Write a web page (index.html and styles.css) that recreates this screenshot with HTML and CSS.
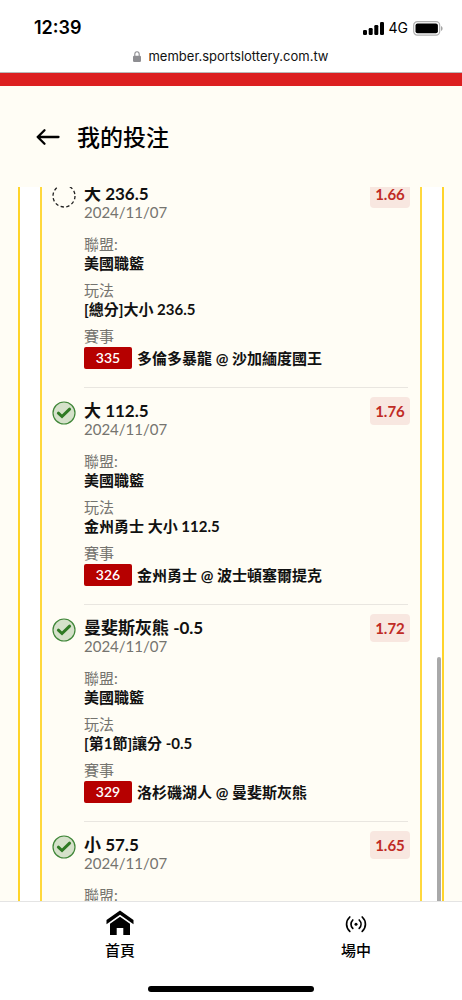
FILE: index.html
```html
<!DOCTYPE html>
<html lang="zh-Hant">
<head>
<meta charset="utf-8">
<meta name="viewport" content="width=device-width, initial-scale=1">
<title>我的投注</title>
<link rel="stylesheet" href="styles.css">
</head>
<body>
<svg class="defs" aria-hidden="true">
  <symbol id="won" viewBox="0 0 24 24">
    <circle cx="12" cy="12" r="11" fill="#d5e1ca" stroke="#3f8638" stroke-width="1.2"/>
    <path d="M6.400 12.200 10 15.500 17.600 8.200" fill="none" stroke="#2f7a24" stroke-width="3" stroke-linecap="round" stroke-linejoin="miter"/>
  </symbol>
</svg>
<div class="screen">
  <div class="status">
    <time class="clock">12:39</time>
    <div class="signals">
      <svg width="21" height="13" viewBox="0 0 21 13" aria-hidden="true"><rect x="0" y="8" width="4" height="5" rx="1.2"/><rect x="5.7" y="6" width="4" height="7" rx="1.2"/><rect x="11.3" y="3" width="4" height="10" rx="1.2"/><rect x="17" y="0" width="4" height="13" rx="1.2"/></svg>
      <span class="network">4G</span>
      <svg width="30" height="15" viewBox="0 0 30 15" aria-hidden="true"><rect x=".7" y=".7" width="26" height="13.4" rx="3.6" fill="none" stroke="#b0b0b0" stroke-width="1.2"/><rect x="2.5" y="2.5" width="22.4" height="9.8" rx="2"/><path d="M28 5v5c1-.4 1.6-1.300 1.600-2.500S29 5.400 28 5z" fill="#a5a5a5"/></svg>
    </div>
  </div>
  <div class="address">
    <svg width="8" height="11" viewBox="0 0 8 11" aria-hidden="true"><path d="M1.800 5V3.200a2.200 2.400 0 0 1 4.400 0V5" fill="none" stroke="#8e8e92" stroke-width="1.100"/><rect y="4.700" width="8" height="6.300" rx="1.200" fill="#8e8e92"/></svg>
    <span>member.sportslottery.com.tw</span>
  </div>
  <div class="brand-bar"></div>
  <header class="header">
    <button class="back" type="button" aria-label="返回">
      <svg width="24" height="18" viewBox="0 0 24 18" fill="none" stroke="#000" stroke-width="2.300" stroke-linecap="round" stroke-linejoin="round" aria-hidden="true"><path d="M22.500 9H1.700M8.500 2.200 1.700 9l6.800 6.800"/></svg>
    </button>
    <h1>我的投注</h1>
  </header>
  <main class="scroller">
    <div class="outer">
      <ul class="bets">
        <li class="bet">
          <svg class="state" viewBox="0 0 24 24" role="img" aria-label="未開獎"><circle cx="12" cy="12" r="11" fill="none" stroke="#222" stroke-width="1.300" stroke-dasharray="3.320 2.440"/></svg>
          <div class="info">
            <h2>大 236.5</h2><p class="date">2024/11/07</p>
            <dl>
              <div><dt>聯盟:</dt><dd>美國職籃</dd></div>
              <div><dt>玩法</dt><dd>[總分]大小 236.5</dd></div>
              <div><dt>賽事</dt><dd class="match"><span class="code">335</span>多倫多暴龍 @ 沙加緬度國王</dd></div>
            </dl>
          </div>
          <span class="odds">1.66</span>
        </li>
        <li class="bet">
          <svg class="state" role="img" aria-label="中獎"><use href="#won"/></svg>
          <div class="info">
            <h2>大 112.5</h2><p class="date">2024/11/07</p>
            <dl>
              <div><dt>聯盟:</dt><dd>美國職籃</dd></div>
              <div><dt>玩法</dt><dd>金州勇士 大小 112.5</dd></div>
              <div><dt>賽事</dt><dd class="match"><span class="code">326</span>金州勇士 @ 波士頓塞爾提克</dd></div>
            </dl>
          </div>
          <span class="odds">1.76</span>
        </li>
        <li class="bet">
          <svg class="state" role="img" aria-label="中獎"><use href="#won"/></svg>
          <div class="info">
            <h2>曼斐斯灰熊 -0.5</h2><p class="date">2024/11/07</p>
            <dl>
              <div><dt>聯盟:</dt><dd>美國職籃</dd></div>
              <div><dt>玩法</dt><dd>[第1節]讓分 -0.5</dd></div>
              <div><dt>賽事</dt><dd class="match"><span class="code">329</span>洛杉磯湖人 @ 曼斐斯灰熊</dd></div>
            </dl>
          </div>
          <span class="odds">1.72</span>
        </li>
        <li class="bet">
          <svg class="state" role="img" aria-label="中獎"><use href="#won"/></svg>
          <div class="info">
            <h2>小 57.5</h2><p class="date">2024/11/07</p>
            <dl>
              <div><dt>聯盟:</dt></div>
            </dl>
          </div>
          <span class="odds">1.65</span>
        </li>
      </ul>
    </div>
    <div class="thumb"></div>
  </main>
  <nav class="tabs">
    <a href="#home">
      <svg width="28" height="26" viewBox="0 0 28 26" aria-hidden="true"><path d="M14 .5 27.500 10v4.300L14 4.700.5 14.300V10z"/><path d="M14 6.800 24 13.800V25h-6.700v-7h-6.600v7H4V13.800z"/></svg>
      <span>首頁</span>
    </a>
    <a href="#live">
      <svg width="28" height="26" viewBox="0 0 28 26" fill="none" stroke="#000" stroke-width="1.700" stroke-linecap="round" aria-hidden="true"><path d="M7.800 7C3.500 11 3.500 17.400 7.800 21.400M20.200 7c4.300 4 4.300 10.400 0 14.400M10.800 10c-2.400 2.400-2.400 6 0 8.400M17.200 10c2.400 2.400 2.400 6 0 8.400"/><circle cx="14" cy="14.200" r="1.500" fill="#000" stroke="none"/></svg>
      <span>場中</span>
    </a>
  </nav>
  <div class="home-indicator"></div>
</div>
</body>
</html>
```
FILE: styles.css
```css
* { box-sizing: border-box; }
body, h1, h2, p, ul, dl, dd { margin: 0; padding: 0; }
body {
  background: #fff;
  color: #111;
  font-family: Lato, "Noto Sans CJK TC", sans-serif;
}
.defs { position: absolute; width: 0; height: 0; }
.screen { display: flex; flex-direction: column; height: 100vh; overflow: hidden; }
.status {
  display: flex;
  justify-content: space-between;
  align-items: center;
  padding: 18px 19px 0 34px;
  font-family: Inter, sans-serif;
  color: #000;
}
.clock { font-size: 18px; line-height: 20px; font-weight: 600; }
.signals { display: flex; align-items: center; gap: 5px; }
.network { font-size: 14px; line-height: 20px; }
.address {
  display: flex;
  justify-content: center;
  align-items: center;
  gap: 7px;
  flex: none;
  height: 35px;
  padding-top: 2px;
  border-bottom: 1px solid #b9b9b9;
  font: 13px/16px Inter, sans-serif;
}
.brand-bar { flex: none; height: 13px; background: #dc1f20; }
.header {
  display: flex;
  align-items: center;
  gap: 17px;
  flex: none;
  height: 101px;
  padding-left: 36px;
  background: #fffdf5;
}
.back { display: flex; padding: 0; border: 0; background: none; }
h1 { font-size: 23px; line-height: 32px; font-weight: 500; color: #000; }
.scroller {
  position: relative;
  flex: 1;
  min-height: 0;
  overflow: hidden;
  padding: 0 18px;
  background: #fffdf5;
}
.outer {
  padding: 0 20px;
  border: solid #ffd42a;
  border-width: 0 2px;
  background: #fff;
}
.bets {
  margin-top: -16px;
  padding: 0 10px 0 10px;
  min-height: 100vh;
  list-style: none;
  border: solid #ffd83d;
  border-width: 0 2px;
  background: #fffdf5;
}
.bet { display: flex; gap: 8px; position: relative; }
.state { flex: none; width: 24px; height: 24px; margin-top: 13px; }
.info { flex: 1; margin-right: 2px; padding: 12px 0 17px; border-bottom: 1px solid #e9e6e0; }
h2 { font-size: 17px; line-height: 21px; font-weight: 700; }
.date { margin-bottom: 15px; font-size: 15px; line-height: 16px; color: #75746f; }
dl { display: grid; gap: 8px; }
dt { font-size: 15px; line-height: 19px; color: #75746f; }
dd { font-size: 15px; line-height: 19px; font-weight: 700; }
.match { display: flex; align-items: center; gap: 5px; line-height: 24px; }
.code {
  width: 48px;
  border-radius: 2px;
  background: #b60000;
  color: #fff;
  font-size: 14px;
  line-height: 22px;
  font-weight: 600;
  text-align: center;
}
.odds {
  position: absolute;
  top: 9px;
  right: 0;
  width: 40px;
  border-radius: 4px;
  background: #f8e7e0;
  color: #c02b25;
  font-size: 15px;
  line-height: 28px;
  font-weight: 700;
  text-align: center;
}
.thumb {
  position: absolute;
  top: 470px;
  right: 21px;
  bottom: 0;
  width: 4px;
  border-radius: 2px 2px 0 0;
  background: #a9a9a9;
}
.tabs {
  display: flex;
  justify-content: space-between;
  padding: 8px 90px 0 104px;
  border-top: 1px solid #e4e4e4;
}
.tabs a {
  display: flex;
  flex-direction: column;
  align-items: center;
  gap: 4px;
  width: 32px;
  color: #000;
  text-decoration: none;
  white-space: nowrap;
  font-size: 15px;
  line-height: 20px;
  font-weight: 500;
}
.home-indicator {
  flex: none;
  align-self: center;
  width: 166px;
  height: 6px;
  margin: 26px 0 8px;
  border-radius: 3px;
  background: #000;
}
```
